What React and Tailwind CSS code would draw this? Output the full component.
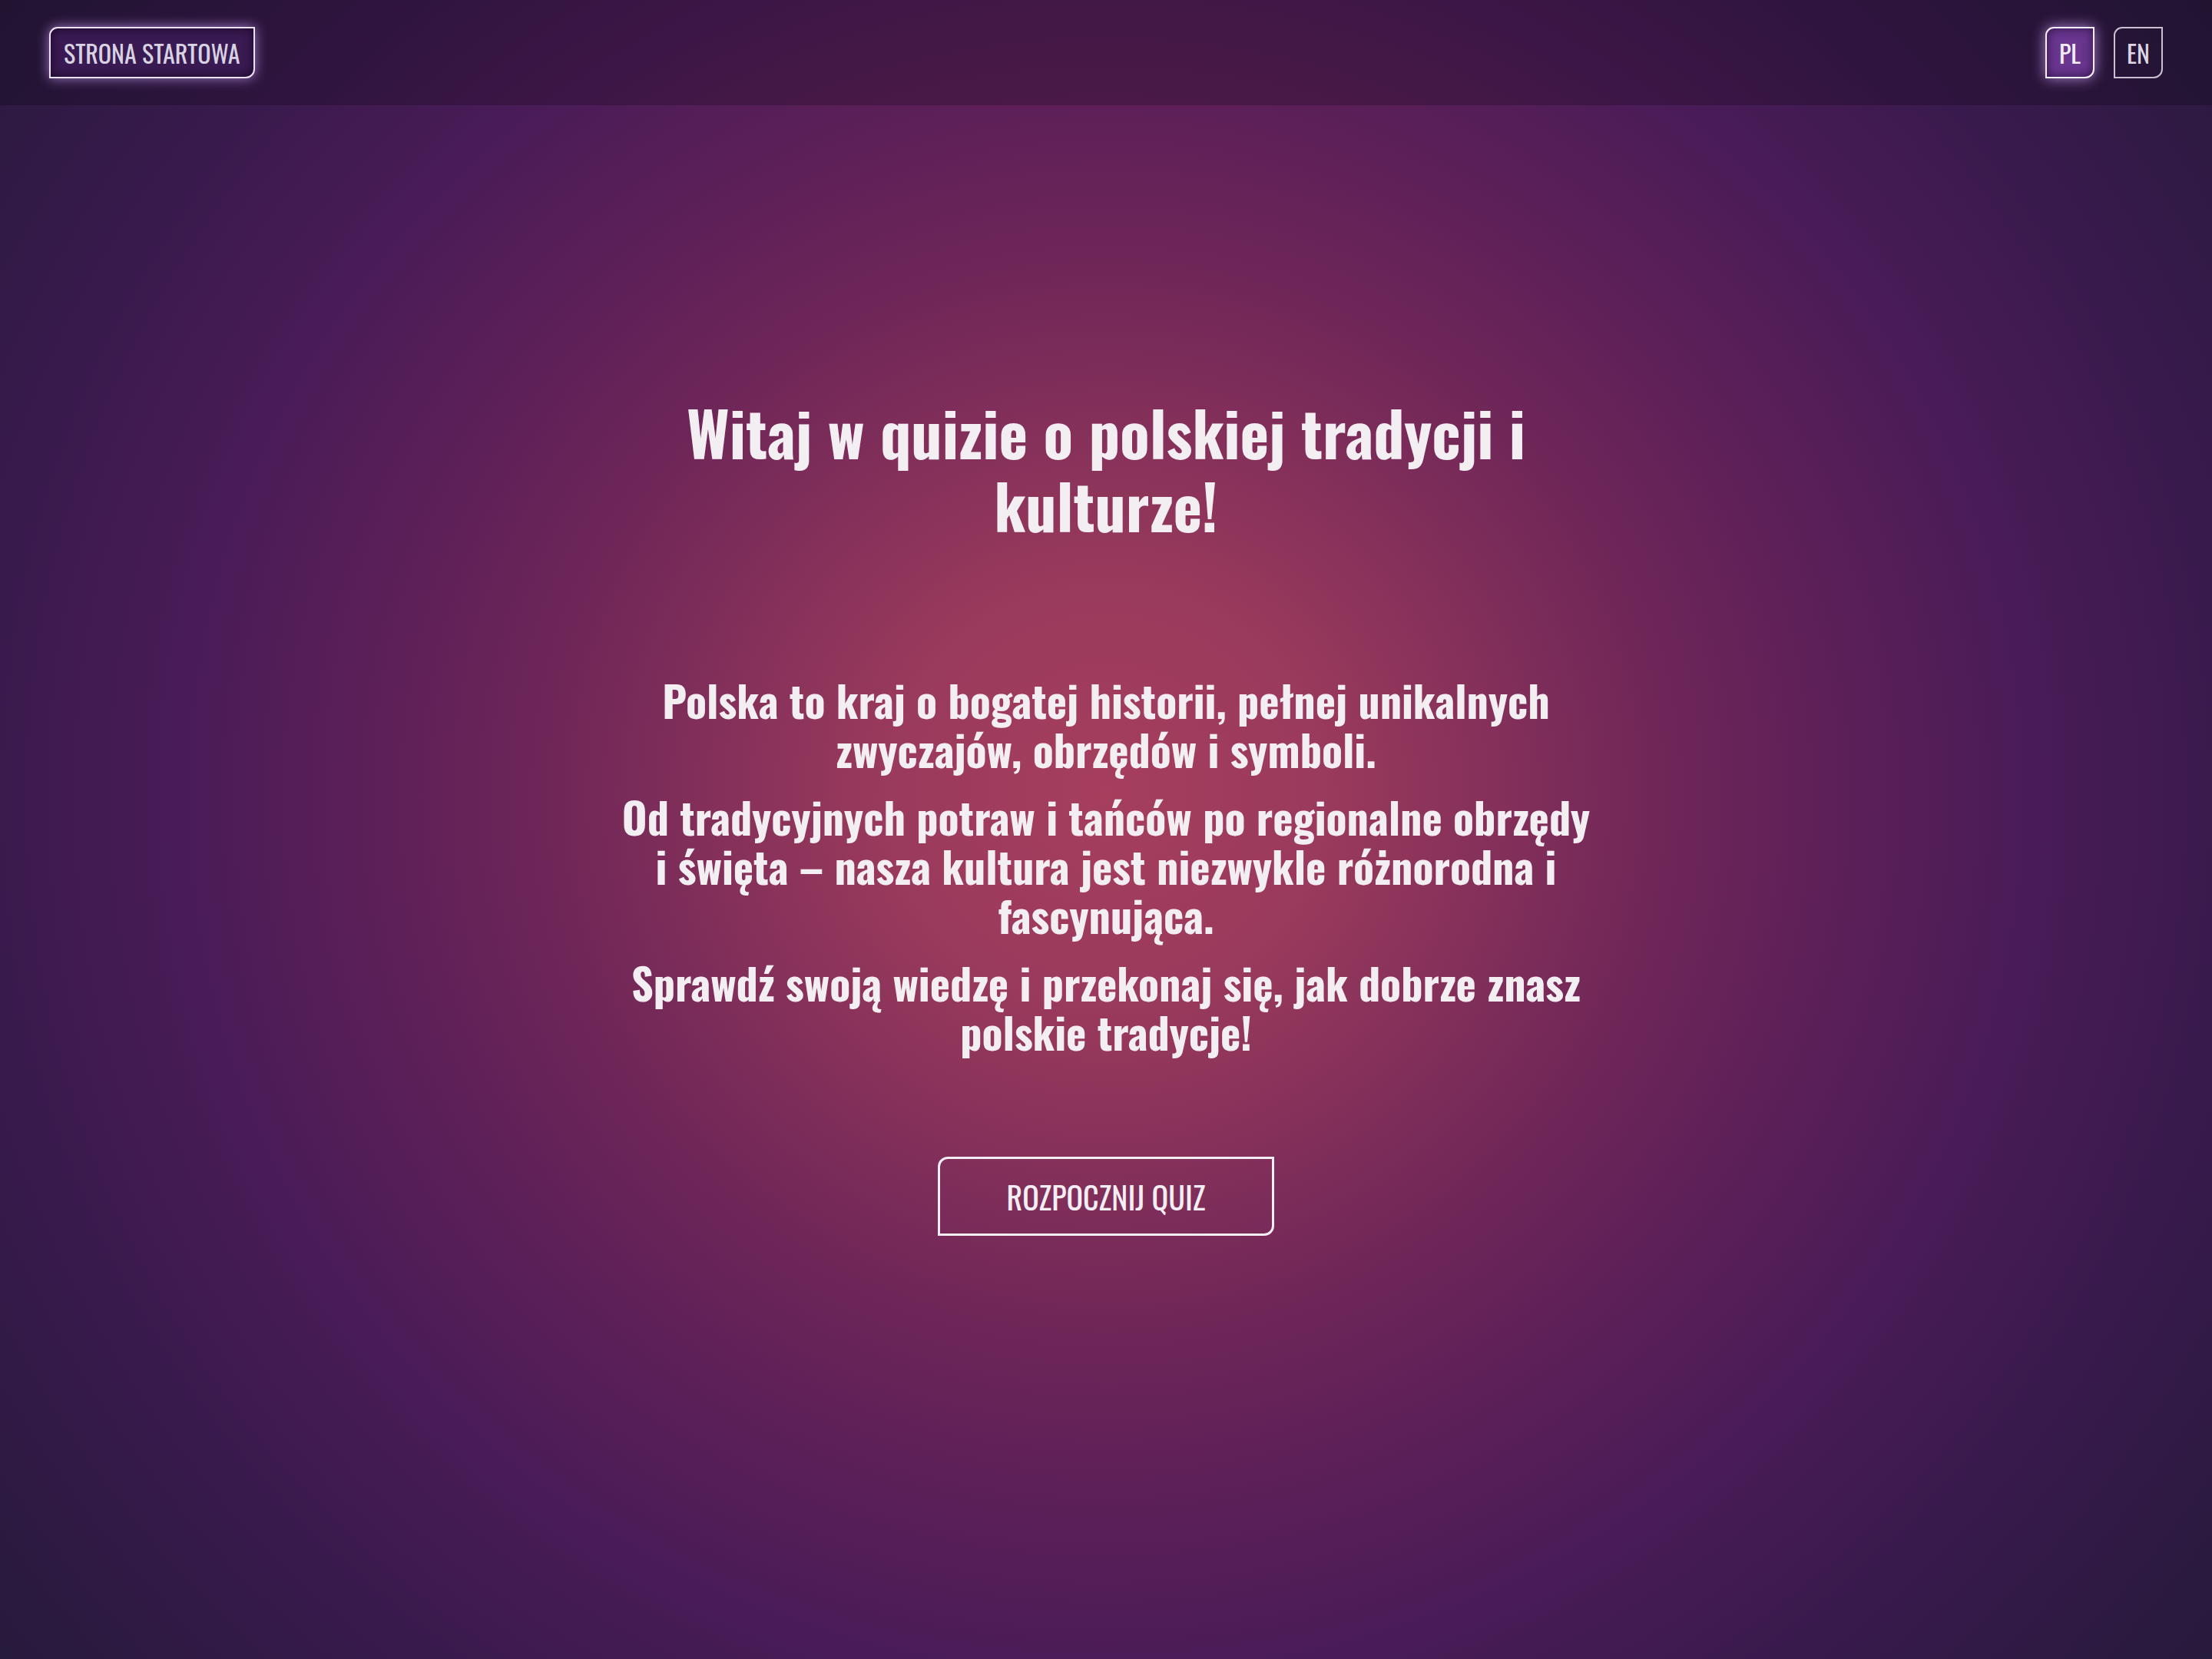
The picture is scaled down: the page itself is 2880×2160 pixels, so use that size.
export default function App() {
  return (
    <div className="min-h-screen bg-[radial-gradient(ellipse_2036px_1946px_at_50%_48%,#a63e5e_0%,#9a3a5c_14%,#6e2658_36%,#5e2058_46%,#4b1c58_58%,#3a1a4e_71%,#1e1a34_100%)] font-['Oswald',sans-serif] text-[#f2eef2]">
      <header className="flex h-[137px] items-center justify-between bg-black/20 px-[64px]">
        <button className="flex h-[67px] items-center rounded-tl-[11px] rounded-br-[12px] border-2 border-[#ece2f4] bg-[#3a1a52] px-[17px] text-[32px] leading-none text-[#d8d3e3] shadow-[0_0_16px_rgba(210,165,255,0.7),inset_0_0_14px_rgba(20,5,30,0.85)]">
          STRONA STARTOWA
        </button>
        <div className="flex gap-[25px]">
          <button className="flex h-[67px] w-[64px] items-center justify-center rounded-tl-[11px] rounded-br-[12px] border-2 border-[#f6f0fc] bg-[#6a3690] text-[32px] leading-none text-[#f2eef8] shadow-[0_0_18px_rgba(215,170,255,0.75),inset_0_0_14px_rgba(30,8,45,0.75)]">
            PL
          </button>
          <button className="flex h-[67px] w-[64px] items-center justify-center rounded-tl-[11px] rounded-br-[12px] border-2 border-[#c9c1d2] text-[32px] leading-none text-[#dcd6e4]">
            EN
          </button>
        </div>
      </header>

      <main className="flex flex-col items-center pt-[378px] pb-[200px] text-center">
        <h1 className="w-[1270px] text-[80px] font-bold leading-[95px]">
          Witaj w quizie o polskiej tradycji i kulturze!
        </h1>

        <div className="mt-[174px] flex w-[1270px] flex-col gap-[24px] text-[56px] font-bold leading-[64px]">
          <p>Polska to kraj o bogatej historii, pełnej unikalnych zwyczajów, obrzędów i symboli.</p>
          <p>
            Od tradycyjnych potraw i tańców po regionalne obrzędy i święta – nasza kultura jest niezwykle różnorodna i
            fascynująca.
          </p>
          <p>Sprawdź swoją wiedzę i przekonaj się, jak dobrze znasz polskie tradycje!</p>
        </div>

        <button className="mt-[131px] flex h-[103px] w-[438px] items-center justify-center rounded-tl-[13px] rounded-br-[13px] border-[3px] border-[#f3eef3] text-[40px] leading-none text-[#f3eef3]">
          ROZPOCZNIJ QUIZ
        </button>
      </main>
    </div>
  );
}
